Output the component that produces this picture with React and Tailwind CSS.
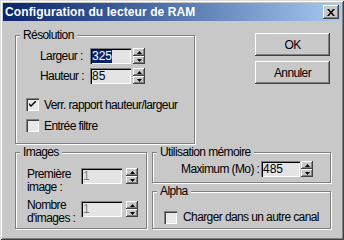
import React from "react";

const raised =
  "shadow-[inset_-1px_-1px_0_#404040,inset_1px_1px_0_#ffffff,inset_-2px_-2px_0_#808080]";
const sunken =
  "shadow-[inset_1px_1px_0_#808080,inset_2px_2px_0_#000000,inset_-1px_-1px_0_#ffffff]";
const group =
  "border border-[#808080] shadow-[1px_1px_0_#ffffff,inset_1px_1px_0_#ffffff] p-0 m-0 min-w-0";
const legend = "ml-[4px] px-[3px] bg-[#c8c8c8] h-[14px] leading-[14px]";

function Spinner() {
  return (
    <div className="flex flex-col w-[12px] h-[16px]">
      <div className={`h-[8px] flex items-center justify-center bg-[#c8c8c8] ${raised}`}>
        <svg width="5" height="3" viewBox="0 0 5 3">
          <path d="M2.5 0 L5 3 L0 3Z" fill="#000" />
        </svg>
      </div>
      <div className={`h-[8px] flex items-center justify-center bg-[#c8c8c8] ${raised}`}>
        <svg width="5" height="3" viewBox="0 0 5 3">
          <path d="M0 0 L5 0 L2.5 3Z" fill="#000" />
        </svg>
      </div>
    </div>
  );
}

function Field({ className, children }) {
  return (
    <div
      className={`h-[16px] bg-[#e4e4e4] ${sunken} flex items-center pl-[2px] pt-[1px] text-[12px] leading-[13px] tracking-normal ${className}`}
    >
      {children}
    </div>
  );
}

function Check({ checked }) {
  return (
    <div
      className={`w-[13px] h-[13px] shrink-0 bg-[#e8e8e8] shadow-[inset_1px_1px_0_#808080,inset_2px_2px_0_#404040,inset_-1px_-1px_0_#ffffff] flex items-center justify-center`}
    >
      {checked && (
        <svg width="7" height="7" viewBox="0 0 7 7">
          <path d="M0 2 L0 4 L2 6 L7 1 L7 -1 L2 4 Z" fill="#000" />
        </svg>
      )}
    </div>
  );
}

function Button({ children, className }) {
  return (
    <div
      className={`w-[75px] h-[23px] bg-[#c8c8c8] ${raised} flex items-center justify-center text-[12px] ${className}`}
    >
      {children}
    </div>
  );
}

export default function App() {
  return (
    <div className="w-[344px] h-[240px] bg-[#c8c8c8] p-[3px] shadow-[inset_1px_1px_0_#dcdcdc,inset_-1px_-1px_0_#404040,inset_2px_2px_0_#ffffff,inset_-2px_-2px_0_#808080] font-['Liberation_Sans',Arial,sans-serif] text-black text-[12px] tracking-[-0.6px] overflow-hidden">
      {/* Title bar */}
      <div className="h-[18px] bg-linear-to-r from-[#0a246a] to-[#a6caf0] flex items-center justify-between pl-[2px] pr-[2px]">
        <span className="text-white font-bold text-[12px] tracking-[0.1px] leading-[18px]">
          Configuration du lecteur de RAM
        </span>
        <div className={`w-[16px] h-[14px] bg-[#c8c8c8] ${raised} flex items-center justify-center`}>
          <svg width="8" height="7" viewBox="0 0 8 7">
            <path d="M0 0 L2 0 L4 2.5 L6 0 L8 0 L5 3.5 L8 7 L6 7 L4 4.5 L2 7 L0 7 L3 3.5 Z" fill="#000" />
          </svg>
        </div>
      </div>

      <div className="pl-[12px] pt-[7px]">
        {/* Top row */}
        <div className="flex items-start">
          <fieldset className={`${group} w-[180px] h-[116px]`}>
            <legend className={legend}>Résolution</legend>
            <div className="pl-[24px] pt-[6px]">
              <div className="flex items-center h-[16px]">
                <span className="w-[50px]">Largeur :</span>
                <Field className="w-[41px]">
                  <span className="bg-[#0a246a] text-white">325</span>
                </Field>
                <div className="ml-[2px]">
                  <Spinner />
                </div>
              </div>
              <div className="flex items-center h-[16px] mt-[4px]">
                <span className="w-[50px]">Hauteur :</span>
                <Field className="w-[41px]">85</Field>
                <div className="ml-[2px]">
                  <Spinner />
                </div>
              </div>
            </div>
            <div className="pl-[10px]">
              <div className="flex items-center mt-[14px] h-[13px]">
                <Check checked />
                <span className="ml-[5px]">Verr. rapport hauteur/largeur</span>
              </div>
              <div className="flex items-center mt-[8px] h-[13px]">
                <Check />
                <span className="ml-[5px]">Entrée filtre</span>
              </div>
            </div>
          </fieldset>

          <div className="ml-[60px] mt-[5px] flex flex-col gap-[5px]">
            <Button>OK</Button>
            <Button>Annuler</Button>
          </div>
        </div>

        {/* Bottom row */}
        <div className="flex items-start mt-[1px]">
          <fieldset className={`${group} w-[132px] h-[84px]`}>
            <legend className={legend}>Images</legend>
            <div className="pl-[11px] pt-[9px]">
              <div className="flex items-start h-[26px]">
                <span className="w-[54px] leading-[13px]">
                  Première
                  <br />
                  image :
                </span>
                <Field className="w-[41px] text-[#808080]">1</Field>
                <div className="ml-[4px]">
                  <Spinner />
                </div>
              </div>
              <div className="flex items-start mt-[7px]">
                <span className="w-[54px] leading-[13px] -mt-[2px]">
                  Nombre
                  <br />
                  d'images :
                </span>
                <Field className="w-[41px] text-[#808080]">1</Field>
                <div className="ml-[4px]">
                  <Spinner />
                </div>
              </div>
            </div>
          </fieldset>

          <div className="ml-[5px] w-[179px] flex flex-col">
            <fieldset className={`${group} w-[179px] h-[38px]`}>
              <legend className={legend}>Utilisation mémoire</legend>
              <div className="pl-[28px] pt-[1px] flex items-center">
                <span className="w-[80px]">Maximum (Mo) :</span>
                <Field className="w-[39px]">485</Field>
                <div className="ml-[1px]">
                  <Spinner />
                </div>
              </div>
            </fieldset>
            <fieldset className={`${group} w-[179px] h-[45px] mt-[1px]`}>
              <legend className={legend}>Alpha</legend>
              <div className="pl-[11px] pt-[10px] flex items-center">
                <Check />
                <span className="ml-[6px]">Charger dans un autre canal</span>
              </div>
            </fieldset>
          </div>
        </div>
      </div>
    </div>
  );
}
